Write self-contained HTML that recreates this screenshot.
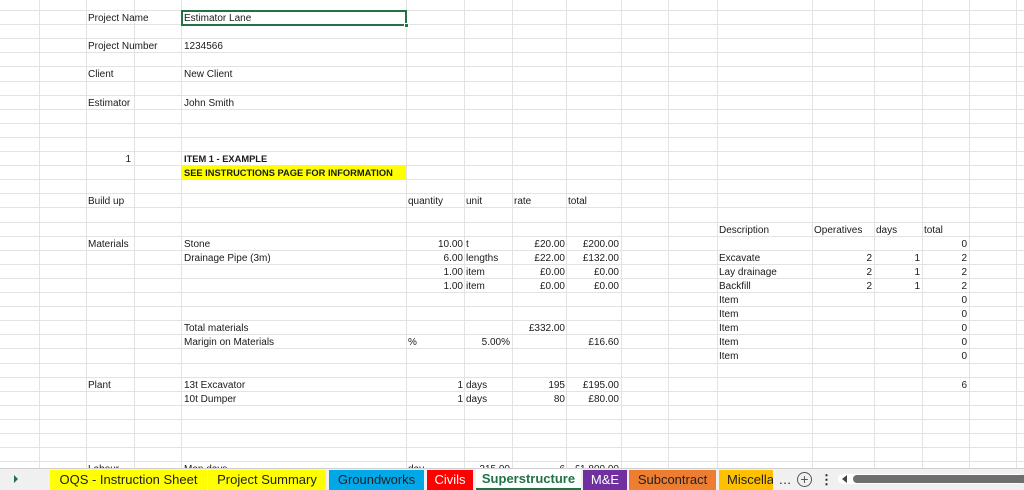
<!DOCTYPE html><html><head><meta charset="utf-8"><style>
*{margin:0;padding:0;box-sizing:border-box}
body{width:1024px;height:490px;overflow:hidden;background:#fff;position:relative;font-family:"Liberation Sans",sans-serif;font-size:10px;color:#1a1a1a}
.h{position:absolute;left:0;width:1024px;height:1px;background:#e3e3e3}
.v{position:absolute;top:0;height:468px;width:1px;background:#e3e3e3}
.c{position:absolute;height:14px;line-height:17px;white-space:nowrap}
.r{text-align:right}
.b{font-weight:bold;font-size:9.3px}
#tabs{position:absolute;left:0;top:468px;width:1024px;height:22px;background:#f0f0f0;border-top:1px solid #d0d0d0}
.t{position:absolute;top:1px;height:20px;line-height:19px;font-size:13px;text-align:center;color:#222}
</style></head><body>
<div class="h" style="top:10px"></div><div class="h" style="top:24px"></div><div class="h" style="top:38px"></div><div class="h" style="top:52px"></div><div class="h" style="top:66px"></div><div class="h" style="top:81px"></div><div class="h" style="top:95px"></div><div class="h" style="top:109px"></div><div class="h" style="top:123px"></div><div class="h" style="top:137px"></div><div class="h" style="top:151px"></div><div class="h" style="top:165px"></div><div class="h" style="top:179px"></div><div class="h" style="top:193px"></div><div class="h" style="top:207px"></div><div class="h" style="top:222px"></div><div class="h" style="top:236px"></div><div class="h" style="top:250px"></div><div class="h" style="top:264px"></div><div class="h" style="top:278px"></div><div class="h" style="top:292px"></div><div class="h" style="top:306px"></div><div class="h" style="top:320px"></div><div class="h" style="top:334px"></div><div class="h" style="top:348px"></div><div class="h" style="top:363px"></div><div class="h" style="top:377px"></div><div class="h" style="top:391px"></div><div class="h" style="top:405px"></div><div class="h" style="top:419px"></div><div class="h" style="top:433px"></div><div class="h" style="top:447px"></div><div class="h" style="top:461px"></div>
<div class="v" style="left:39px"></div><div class="v" style="left:86px"></div><div class="v" style="left:134px"></div><div class="v" style="left:181px"></div><div class="v" style="left:406px"></div><div class="v" style="left:464px"></div><div class="v" style="left:512px"></div><div class="v" style="left:566px"></div><div class="v" style="left:621px"></div><div class="v" style="left:668px"></div><div class="v" style="left:717px"></div><div class="v" style="left:812px"></div><div class="v" style="left:874px"></div><div class="v" style="left:922px"></div><div class="v" style="left:969px"></div><div class="v" style="left:1016px"></div>
<div style="position:absolute;left:181px;top:166px;width:225px;height:14px;background:#ffff00"></div>
<div style="position:absolute;left:181px;top:10px;width:226px;height:16px;border:2px solid #217346"></div>
<div style="position:absolute;left:404px;top:23px;width:5px;height:5px;background:#217346;border:1px solid #fff"></div>

<div class="c" style="left:88px;top:10px">Project Name</div><div class="c" style="left:184px;top:10px">Estimator Lane</div>
<div class="c" style="left:88px;top:38px">Project Number</div><div class="c" style="left:184px;top:38px">1234566</div>
<div class="c" style="left:88px;top:66px">Client</div><div class="c" style="left:184px;top:66px">New Client</div>
<div class="c" style="left:88px;top:95px">Estimator</div><div class="c" style="left:184px;top:95px">John Smith</div>
<div class="c r" style="left:86px;width:45px;top:151px">1</div><div class="c b" style="left:184px;top:151px">ITEM 1 - EXAMPLE</div>
<div class="c b" style="left:184px;top:165px">SEE INSTRUCTIONS PAGE FOR INFORMATION</div>
<div class="c" style="left:88px;top:193px">Build up</div><div class="c" style="left:408px;top:193px">quantity</div><div class="c" style="left:466px;top:193px">unit</div><div class="c" style="left:514px;top:193px">rate</div><div class="c" style="left:568px;top:193px">total</div>
<div class="c" style="left:719px;top:222px">Description</div><div class="c" style="left:814px;top:222px">Operatives</div><div class="c" style="left:876px;top:222px">days</div><div class="c" style="left:924px;top:222px">total</div>

<div class="c" style="left:88px;top:236px">Materials</div><div class="c" style="left:184px;top:236px">Stone</div><div class="c r" style="left:406px;width:57px;top:236px">10.00</div><div class="c" style="left:466px;top:236px">t</div><div class="c r" style="left:512px;width:53px;top:236px">£20.00</div><div class="c r" style="left:566px;width:53px;top:236px">£200.00</div><div class="c r" style="left:922px;width:45px;top:236px">0</div>
<div class="c" style="left:184px;top:250px">Drainage Pipe (3m)</div><div class="c r" style="left:406px;width:57px;top:250px">6.00</div><div class="c" style="left:466px;top:250px">lengths</div><div class="c r" style="left:512px;width:53px;top:250px">£22.00</div><div class="c r" style="left:566px;width:53px;top:250px">£132.00</div><div class="c" style="left:719px;top:250px">Excavate</div><div class="c r" style="left:812px;width:60px;top:250px">2</div><div class="c r" style="left:874px;width:46px;top:250px">1</div><div class="c r" style="left:922px;width:45px;top:250px">2</div>
<div class="c r" style="left:406px;width:57px;top:264px">1.00</div><div class="c" style="left:466px;top:264px">item</div><div class="c r" style="left:512px;width:53px;top:264px">£0.00</div><div class="c r" style="left:566px;width:53px;top:264px">£0.00</div><div class="c" style="left:719px;top:264px">Lay drainage</div><div class="c r" style="left:812px;width:60px;top:264px">2</div><div class="c r" style="left:874px;width:46px;top:264px">1</div><div class="c r" style="left:922px;width:45px;top:264px">2</div>
<div class="c r" style="left:406px;width:57px;top:278px">1.00</div><div class="c" style="left:466px;top:278px">item</div><div class="c r" style="left:512px;width:53px;top:278px">£0.00</div><div class="c r" style="left:566px;width:53px;top:278px">£0.00</div><div class="c" style="left:719px;top:278px">Backfill</div><div class="c r" style="left:812px;width:60px;top:278px">2</div><div class="c r" style="left:874px;width:46px;top:278px">1</div><div class="c r" style="left:922px;width:45px;top:278px">2</div>
<div class="c" style="left:719px;top:292px">Item</div><div class="c r" style="left:922px;width:45px;top:292px">0</div>
<div class="c" style="left:719px;top:306px">Item</div><div class="c r" style="left:922px;width:45px;top:306px">0</div>
<div class="c" style="left:184px;top:320px">Total materials</div><div class="c r" style="left:512px;width:53px;top:320px">£332.00</div><div class="c" style="left:719px;top:320px">Item</div><div class="c r" style="left:922px;width:45px;top:320px">0</div>
<div class="c" style="left:184px;top:334px">Marigin on Materials</div><div class="c" style="left:408px;top:334px">%</div><div class="c r" style="left:464px;width:46px;top:334px">5.00%</div><div class="c r" style="left:566px;width:53px;top:334px">£16.60</div><div class="c" style="left:719px;top:334px">Item</div><div class="c r" style="left:922px;width:45px;top:334px">0</div>
<div class="c" style="left:719px;top:348px">Item</div><div class="c r" style="left:922px;width:45px;top:348px">0</div>
<div class="c" style="left:88px;top:377px">Plant</div><div class="c" style="left:184px;top:377px">13t Excavator</div><div class="c r" style="left:406px;width:57px;top:377px">1</div><div class="c" style="left:466px;top:377px">days</div><div class="c r" style="left:512px;width:53px;top:377px">195</div><div class="c r" style="left:566px;width:53px;top:377px">£195.00</div><div class="c r" style="left:922px;width:45px;top:377px">6</div>
<div class="c" style="left:184px;top:391px">10t Dumper</div><div class="c r" style="left:406px;width:57px;top:391px">1</div><div class="c" style="left:466px;top:391px">days</div><div class="c r" style="left:512px;width:53px;top:391px">80</div><div class="c r" style="left:566px;width:53px;top:391px">£80.00</div>
<div class="c" style="left:88px;top:461px">Labour</div><div class="c" style="left:184px;top:461px">Man days</div><div class="c" style="left:408px;top:461px">day</div><div class="c r" style="left:464px;width:46px;top:461px">215.00</div><div class="c r" style="left:512px;width:53px;top:461px">6</div><div class="c r" style="left:566px;width:53px;top:461px">£1,800.00</div>

<div id="tabs">
<div style="position:absolute;left:14px;top:6px;width:0;height:0;border-left:4px solid #217346;border-top:4px solid transparent;border-bottom:4px solid transparent"></div>
<div class="t" style="left:50px;width:157px;background:#ffff00">OQS - Instruction Sheet</div>
<div class="t" style="left:208px;width:118px;background:#ffff00">Project Summary</div>
<div class="t" style="left:329px;width:95px;background:#00a8e8">Groundworks</div>
<div class="t" style="left:427px;width:46px;background:#ff0000;color:#fff">Civils</div>
<div class="t" style="left:476px;width:105px;background:#fff;color:#217346;font-weight:bold;border-bottom:2px solid #217346;top:0;height:21px">Superstructure</div>
<div class="t" style="left:583px;width:44px;background:#7030a0;color:#fff">M&amp;E</div>
<div class="t" style="left:629px;width:87px;background:#ed7d31">Subcontract</div>
<div class="t" style="left:719px;width:54px;background:#ffc000;text-align:left;padding-left:8px;overflow:hidden">Miscella</div>
<div class="t" style="left:777px;width:16px;background:none">…</div>
<div style="position:absolute;left:797px;top:3px;width:15px;height:15px;border:1px solid #555;border-radius:50%;text-align:center;line-height:13px;font-size:14px;color:#555">+</div>
<div class="t" style="left:820px;width:12px;background:none;font-weight:bold">⋮</div>
<div style="position:absolute;left:838px;top:5px;width:186px;height:10px;background:#fff;border-radius:5px"></div>
<div style="position:absolute;left:842px;top:6px;width:0;height:0;border-right:5px solid #444;border-top:4px solid transparent;border-bottom:4px solid transparent"></div>
<div style="position:absolute;left:853px;top:6px;width:171px;height:8px;background:#6e6e6e;border-radius:4px 0 0 4px"></div>
</div>
</body></html>
